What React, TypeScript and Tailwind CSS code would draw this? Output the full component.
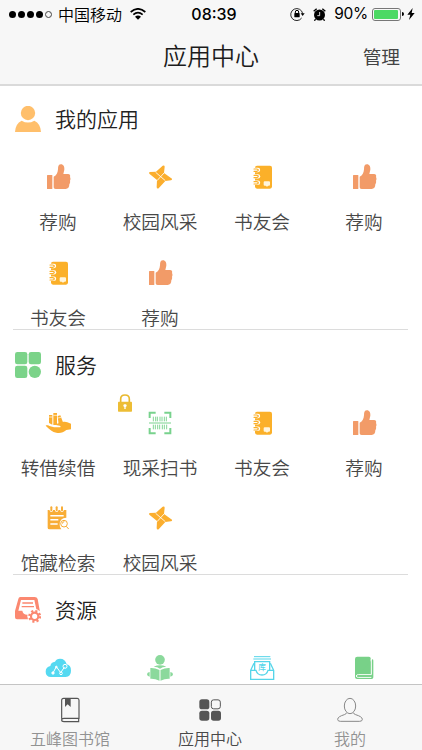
import type { ReactNode } from "react";

type IconProps = { className?: string };

const ThumbIcon = ({ className }: IconProps) => (
  <svg viewBox="0 0 78 78" className={className} fill="#f29b68">
    <rect x="6" y="33" width="16" height="42" rx="1.5" />
    <path d="M26 38c9-4 12-11 13-22 0-10 2-15 9-15s11 7 10 16l-3 13h14c6 0 8 5 6 9 2 4 2 8 0 11 1 4 0 8-2 11 0 9-4 14-11 14H32c-4 0-6-2-6-6z" />
  </svg>
);

const PinwheelIcon = ({ className }: IconProps) => (
  <svg viewBox="0 0 78 78" className={className}>
    <path
      d="M8 24l19-1L47 5q6-2 6 3l-2 19 24 17q1 4-3 5l-17 2-20 22q-6 2-6-4l1-21L7 29q-2-3 1-5z"
      fill="#fbae2e"
    />
    <path d="M26 25l29 25M51 27L30 50" stroke="#fff" strokeWidth="2.5" />
  </svg>
);

const NotebookIcon = ({ className }: IconProps) => (
  <svg viewBox="0 0 78 78" className={className}>
    <path d="M24 5h39q6 0 6 6v56q0 7-6 7H24q-6 0-6-7V11q0-6 6-6z" fill="#fbb029" />
    {[18, 37, 56].map((y) => (
      <g key={y} fill="none" strokeLinecap="round">
        <path d={`M15 ${y}h12`} stroke="#fff" strokeWidth="13" />
        <path d={`M15 ${y - 3}h8q5 0 5 3t-5 4h-8`} stroke="#fbb029" strokeWidth="3.5" />
      </g>
    ))}
    <path d="M47 52h13q3 0 3 3v7q0 3-3 3h-2l-4 3-4-3h-3q-3 0-3-3v-7q0-3 3-3z" fill="#fff5dc" />
  </svg>
);

const LendIcon = ({ className }: IconProps) => (
  <svg viewBox="0 0 78 78" className={className} fill="#fbae2e">
    <path d="M12 15h10v29l-10-5z" />
    <path d="M25 9h11v36H25z" />
    <path d="M38 18l8-2 9 24-14 4z" />
    <path d="M2 47c4-3 9 0 14 2l11 3h16c5 0 5-4 1-5l-8-1c-4-1-4-4 0-5l17-5c6-2 10-1 14 1l11 4v17l-14 2c-9 8-19 10-30 8-12-2-19-9-32-21z" />
    <path d="M12 21h10M25 16h11M39 24l9-2" stroke="#fff" strokeWidth="2" />
  </svg>
);

const BarcodeIcon = ({ className }: IconProps) => (
  <svg viewBox="0 0 78 78" className={className} fill="none" stroke="#78d28d">
    <path d="M8 24V8h18M52 8h18v16M8 54v16h18M52 70h18V54" strokeWidth="6" />
    <path d="M6 39h66" strokeWidth="3" />
    <path d="M19 20v14M26 20v14M31 20v14M39 20v14M45 20v14M52 20v14M58 20v14" strokeWidth="2.8" />
    <path d="M19 44v14M25 44v14M32 44v14M38 44v14M46 44v14M52 44v14M59 44v14" strokeWidth="2.8" />
  </svg>
);

const CatalogIcon = ({ className }: IconProps) => (
  <svg viewBox="0 0 78 78" className={className}>
    <path d="M8 15h56v23q-20 0-20 21 0 9 5 14H13q-5 0-5-5z" fill="#f8ad36" />
    <g strokeLinecap="round">
      {[19, 35, 51].map((x) => (
        <g key={x}>
          <path d={`M${x} 7v9`} stroke="#fff" strokeWidth="10" />
          <path d={`M${x} 7v9`} stroke="#f8ad36" strokeWidth="6" />
        </g>
      ))}
    </g>
    <path d="M16 32h40M16 44h24M16 57h22" stroke="#fff" strokeWidth="4.5" />
    <circle cx="57" cy="56" r="10" fill="#fff" stroke="#f8ad36" strokeWidth="3" />
    <path d="M64 64l7 8M52 56q0-6 6-6" fill="none" stroke="#f8ad36" strokeWidth="3" />
  </svg>
);

const CloudIcon = ({ className }: IconProps) => (
  <svg viewBox="0 0 78 78" className={className}>
    <path d="M18 66Q2 65 2 50q0-14 14-17 2-12 14-13 4-9 15-9 16 0 20 17 13 2 13 19 0 18-16 19z" fill="#55d9f1" />
    <g fill="none" stroke="#fff" strokeWidth="3">
      <path d="M25 52l9-17 13 18 11-16" />
      <circle cx="24" cy="54" r="3.500" fill="#fff" />
      <circle cx="34" cy="36" r="2.500" fill="#fff" />
      <circle cx="48" cy="55" r="4" />
      <circle cx="60" cy="34" r="6" />
    </g>
  </svg>
);

const ReaderIcon = ({ className }: IconProps) => (
  <svg viewBox="0 0 78 78" className={className} fill="#8bd99c">
    <circle cx="39" cy="14.500" r="14.500" />
    <path d="M10 39q13-1 27.500 6v32q-14-7-27.500-6zM68 39q-13-1-27.500 6v32q14-7 27.500-6z" />
    <path d="M20 35q19-8 38 0-12 0-19 6-7-6-19-6z" />
    <path d="M8 51v14q-8-1-8-7t8-7zM70 51v14q8-1 8-7t-8-7z" />
  </svg>
);

const ArchiveIcon = ({ className }: IconProps) => (
  <svg viewBox="0 0 78 78" className={className} fill="none" stroke="#55d5e9" strokeWidth="4">
    <path d="M15 5h49M13 12h53" strokeWidth="3" />
    <path d="M17 46V20h45v26" />
    <path d="M15 25L5 46v27h69V46L64 25M5 46h16q4 14 18 14t18-14h17" />
    <text
      x="39.5"
      y="44"
      textAnchor="middle"
      fontSize="23"
      fontWeight="500"
      fontFamily="Noto Sans CJK SC, sans-serif"
      fill="#55d5e9"
      stroke="none"
    >
      库
    </text>
  </svg>
);

const GreenBookIcon = ({ className }: IconProps) => (
  <svg viewBox="0 0 78 78" className={className}>
    <path d="M19 5h35q5 0 5 5v61H19q-7 0-7-7V12q0-7 7-7z" fill="#78d188" />
    <path d="M64 13q3 0 3 4v50q0 5-5 5H19q-7 0-7-7h5" fill="#78d188" />
    <path d="M61 10v49H22q-6 0-6 4t6 4h39" fill="none" stroke="#fff" strokeWidth="3" />
    <path d="M19 61h40v4H19z" fill="#78d188" />
  </svg>
);

const LockIcon = ({ className }: IconProps) => (
  <svg viewBox="0 0 42 54" className={className}>
    <path d="M8 25V15Q8 3 21 3t13 12v10" fill="none" stroke="#e9b92f" strokeWidth="5" />
    <rect y="23" width="42" height="30" rx="2" fill="#edbd34" />
    <path d="M21 31a4 4 0 012 8v6h-4v-6a4 4 0 012-8z" fill="#fff" />
  </svg>
);

const MineIcon = () => (
  <svg viewBox="0 0 78 78" className="size-[26px]" fill="#ffbf6b">
    <circle cx="39" cy="21" r="21.500" />
    <path d="M0 78q1-25 20-34 19 11 38 0 19 9 20 34z" />
  </svg>
);

const ServiceIcon = () => (
  <svg viewBox="0 0 78 78" className="size-[26px]" fill="#7bd389">
    <rect width="37" height="37" rx="7" />
    <rect x="41" width="37" height="37" rx="7" />
    <rect y="41" width="37" height="37" rx="7" />
    <circle cx="59.500" cy="59.500" r="18.500" />
  </svg>
);

const ResourceIcon = () => (
  <svg viewBox="0 0 78 78" className="size-[26px]">
    <path d="M16 0h43q7 0 9 6l6 34v27H6q-6 0-6-6V42L10 6q1-6 6-6z" fill="#fb8870" />
    <path d="M18 9h40l7 32H53q-3 12-16 12T22 41H10z" fill="#fff" />
    <path d="M22 18h32M20 29h37" stroke="#fb8870" strokeWidth="4" />
    <circle cx="59" cy="58" r="22" fill="#fff" />
    <circle cx="59" cy="58" r="16" fill="none" stroke="#fb8870" strokeWidth="7" strokeDasharray="6.283 6.283" />
    <circle cx="59" cy="58" r="11" fill="none" stroke="#fb8870" strokeWidth="6.500" />
  </svg>
);

type AppItem = {
  label: string;
  icon: (props: IconProps) => ReactNode;
  locked?: boolean;
};

const recommend: AppItem = { label: "荐购", icon: ThumbIcon };
const campus: AppItem = { label: "校园风采", icon: PinwheelIcon };
const bookClub: AppItem = { label: "书友会", icon: NotebookIcon };

const sections: { title: string; icon: () => ReactNode; items: AppItem[] }[] = [
  {
    title: "我的应用",
    icon: MineIcon,
    items: [recommend, campus, bookClub, recommend, bookClub, recommend],
  },
  {
    title: "服务",
    icon: ServiceIcon,
    items: [
      { label: "转借续借", icon: LendIcon },
      { label: "现采扫书", icon: BarcodeIcon, locked: true },
      bookClub,
      recommend,
      { label: "馆藏检索", icon: CatalogIcon },
      campus,
    ],
  },
  {
    title: "资源",
    icon: ResourceIcon,
    items: [
      { label: "", icon: CloudIcon },
      { label: "", icon: ReaderIcon },
      { label: "", icon: ArchiveIcon },
      { label: "", icon: GreenBookIcon },
    ],
  },
];

const StatusBar = () => (
  <div className="grid h-7 grid-cols-[1fr_auto_1fr] items-center pr-[7px] pl-[9px] text-black">
    <div className="flex items-center">
      <div className="flex gap-[2px]">
        {[1, 2, 3, 4].map((n) => (
          <span key={n} className="size-[7px] rounded-full bg-black" />
        ))}
        <span className="size-[7px] rounded-full border border-[#444]" />
      </div>
      <span className="mb-px ml-[6px] text-[16px] leading-none font-[350]">中国移动</span>
      <svg viewBox="0 0 48 36" className="ml-[8px] h-[12px] w-[16px]" fill="none" stroke="#000" strokeWidth="5">
        <path d="M2 12Q24-7 46 12M10 20q14-12 28 0" />
        <path d="M15 26q9-7 18 0l-9 9z" fill="#000" stroke="none" />
      </svg>
    </div>
    <span className="pl-[4px] font-[Inter] text-[16px] leading-none font-medium">08:39</span>
    <div className="flex items-center justify-end">
      <svg viewBox="0 0 45 42" className="h-[14px] w-[15px]" fill="none" stroke="#000" strokeWidth="2.5">
        <path d="M35 33A18 18 0 1138 20" />
        <path d="M32 19h12l-6 8z" fill="#000" stroke="none" />
        <path d="M16 19v-4q0-5 5-5t5 5v4" strokeWidth="3" />
        <rect x="13" y="18" width="16" height="13" rx="2" fill="#000" stroke="none" />
      </svg>
      <svg viewBox="0 0 39 39" className="ml-[8px] size-[13px]">
        <circle cx="19.500" cy="21" r="16.500" fill="#000" />
        <path d="M2 10l9-8M37 10l-9-8M8 34l-4 4M31 34l4 4" stroke="#000" strokeWidth="4" />
        <path d="M20 12v11h-7" fill="none" stroke="#fff" strokeWidth="2.5" />
      </svg>
      <span className="ml-[8px] font-[Inter] text-[15.5px] leading-none font-normal tracking-[-0.3px]">90%</span>
      <div className="ml-[4px] flex h-[13px] w-[29px] rounded-[3px] border border-[#777] p-px">
        <div className="w-[95%] rounded-[1px] bg-[#4cd964]" />
      </div>
      <span className="ml-px h-[4px] w-[2px] rounded-r-full bg-black" />
      <svg viewBox="0 0 24 36" className="ml-[3px] h-[12px] w-[8px]">
        <path d="M17 0L1 20h9L6 36l17-21h-9z" />
      </svg>
    </div>
  </div>
);

const AppCell = ({ item }: { item: AppItem }) => {
  const Icon = item.icon;

  return (
    <div className="relative flex h-20 flex-col items-center pt-[12px]">
      <Icon className="size-[26px]" />
      <span className="mt-[20px] text-[18.7px] leading-[22px] whitespace-nowrap text-[#484848]">{item.label}</span>
      {item.locked && <LockIcon className="absolute top-[-4px] left-[9px] h-[18px] w-[14px]" />}
    </div>
  );
};

const tabs = [
  {
    label: "五峰图书馆",
    active: false,
    icon: (
      <svg viewBox="0 0 78 78" className="size-[26px]" fill="none" stroke="#555" strokeWidth="3.500">
        <path d="M14 65V10q0-6 6-6h41q5 0 5 6v54H21q-7 0-7 5 0 5 7 5h44V64" />
        <path d="M24 5h17v25l-9-8-8 8z" fill="#555" stroke="none" />
      </svg>
    ),
  },
  {
    label: "应用中心",
    active: true,
    icon: (
      <svg viewBox="0 0 78 78" className="size-[26px]" fill="#555">
        <rect x="7" y="7" width="30" height="30" rx="8" />
        <rect x="43" y="8.500" width="27" height="27" rx="7" fill="none" stroke="#555" strokeWidth="3" />
        <rect x="7" y="41" width="30" height="30" rx="8" />
        <rect x="42" y="41" width="30" height="30" rx="8" />
      </svg>
    ),
  },
  {
    label: "我的",
    active: false,
    icon: (
      <svg viewBox="0 0 78 78" className="size-[26px]" fill="none" stroke="#888" strokeWidth="3">
        <ellipse cx="39" cy="27" rx="17" ry="23" />
        <path d="M29 47q-1 4-7 6-20 6-20 14 0 6 8 6h58q8 0 8-6 0-8-20-14-6-2-7-6" />
      </svg>
    ),
  },
];

const App = () => {
  return (
    <div className="flex h-[750px] w-[422px] flex-col overflow-hidden bg-white font-['Noto_Sans_CJK_SC',sans-serif] font-[350]">
      <header className="h-[86px] shrink-0 border-b-2 border-[#dadada] bg-[#f7f7f7]">
        <StatusBar />
        <div className="grid h-[54px] grid-cols-[1fr_auto_1fr] items-center px-[22px]">
          <h1 className="col-start-2 text-[24px] leading-none text-[#1c1c1c]">应用中心</h1>
          <button className="mt-[2px] justify-self-end text-[18.7px] leading-none font-normal text-[#444]">
            管理
          </button>
        </div>
      </header>

      <main className="min-h-0 flex-1 overflow-hidden">
        {sections.map((section) => (
          <section key={section.title} className="mb-[2px]">
            <div className="flex h-[66px] items-center gap-[14px] pl-[15px]">
              <section.icon />
              <h2 className="mb-px text-[21px] leading-none text-[#222]">{section.title}</h2>
            </div>
            <div className="grid grid-cols-[repeat(4,102px)] gap-y-[15.5px] pl-[7px]">
              {section.items.map((item, index) => (
                <AppCell key={index} item={item} />
              ))}
            </div>
            <div className="mt-px mr-[14px] ml-[13px] h-px bg-[#dcdcdc]" />
          </section>
        ))}
      </main>

      <nav className="grid h-[66px] shrink-0 grid-cols-[repeat(3,140px)] border-t border-[#c4c4c4] bg-[#f7f7f7]">
        {tabs.map((tab) => (
          <div key={tab.label} className="flex flex-col items-center pt-[12px]">
            {tab.icon}
            <span
              className={`mt-[5px] text-[16px] leading-[20px] whitespace-nowrap ${
                tab.active ? "text-[#484848]" : "text-[#929292]"
              }`}
            >
              {tab.label}
            </span>
          </div>
        ))}
      </nav>
    </div>
  );
};

export default App;
